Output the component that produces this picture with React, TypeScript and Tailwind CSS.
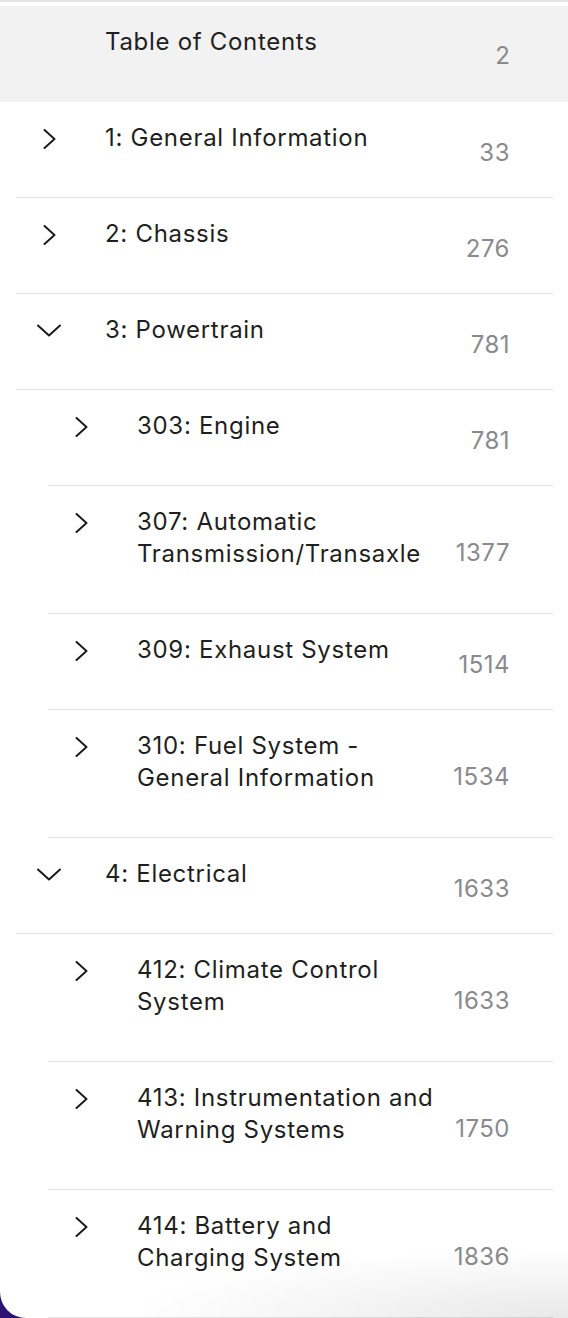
type Item = {
  title: string;
  page: number;
  level: 0 | 1;
  open?: boolean;
};

const items: Item[] = [
  { title: "1: General Information", page: 33, level: 0 },
  { title: "2: Chassis", page: 276, level: 0 },
  { title: "3: Powertrain", page: 781, level: 0, open: true },
  { title: "303: Engine", page: 781, level: 1 },
  { title: "307: Automatic Transmission/Transaxle", page: 1377, level: 1 },
  { title: "309: Exhaust System", page: 1514, level: 1 },
  { title: "310: Fuel System - General Information", page: 1534, level: 1 },
  { title: "4: Electrical", page: 1633, level: 0, open: true },
  { title: "412: Climate Control System", page: 1633, level: 1 },
  { title: "413: Instrumentation and Warning Systems", page: 1750, level: 1 },
  { title: "414: Battery and Charging System", page: 1836, level: 1 },
];

function Chevron({ open }: { open?: boolean }) {
  if (open) {
    return (
      <svg width="24" height="13" viewBox="0 0 24 13" fill="none">
        <path
          d="M1 1.5L12 11.5L23 1.5"
          stroke="#1c1c1e"
          strokeWidth="2"
          strokeLinecap="round"
          strokeLinejoin="round"
        />
      </svg>
    );
  }
  return (
    <svg width="13" height="20" viewBox="0 0 13 20" fill="none">
      <path
        d="M1.5 1L11.5 10L1.5 19"
        stroke="#1c1c1e"
        strokeWidth="2"
        strokeLinecap="round"
        strokeLinejoin="round"
      />
    </svg>
  );
}

function Row({ item }: { item: Item }) {
  return (
    <li
      className={
        "flex border-b border-[#e3e3e3] mr-[15px] " +
        (item.level === 0 ? "ml-4" : "ml-12")
      }
    >
      <div className="w-[66px] h-[64px] shrink-0 flex items-center justify-center pt-[9px]">
        <Chevron open={item.open} />
      </div>
      <div className="flex-1 pl-[23px] pt-5 pb-[43px] text-[24px] leading-[32px] tracking-[0.7px] text-[#1f1f21]">
        {item.title}
      </div>
      <div className="w-[105px] shrink-0 pr-[43px] flex items-center justify-end pt-[6px] text-[24px] tracking-[0.5px] text-[#8a8a8e]">
        {item.page}
      </div>
    </li>
  );
}

export default function App() {
  return (
    <div
      className="relative w-[568px] h-[1318px] overflow-hidden bg-[#2b1170]"
      style={{ fontFamily: "Inter, 'Noto Sans', sans-serif" }}
    >
      <div className="h-full bg-white rounded-bl-[26px] overflow-hidden">
        <div className="h-[2px] bg-[#e4e4e4]" />
        <div className="h-[4px] bg-white" />
        <div className="flex bg-[#f2f2f2] h-[96px]">
          <div className="flex-1 pl-[105px] pt-5 text-[24px] leading-[32px] tracking-[0.7px] text-[#1f1f21]">
            Table of Contents
          </div>
          <div className="pr-[58px] flex items-center pt-[4px] text-[24px] text-[#8a8a8e]">
            2
          </div>
        </div>
        <ul>
          {items.map((item) => (
            <Row key={item.title} item={item} />
          ))}
        </ul>
      </div>
      <div className="pointer-events-none absolute bottom-0 left-[120px] right-0 h-[70px] bg-[radial-gradient(ellipse_at_bottom_right,rgba(0,0,0,0.09),rgba(0,0,0,0)_70%)]" />
    </div>
  );
}
